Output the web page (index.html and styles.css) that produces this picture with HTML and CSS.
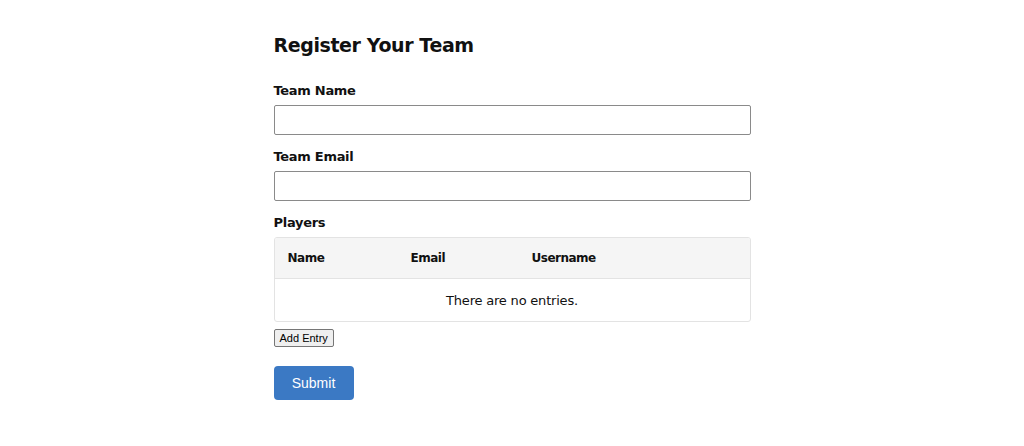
FILE: index.html
```html
<!DOCTYPE html>
<html>
<head>
<meta charset="utf-8">
<link rel="stylesheet" href="styles.css">
</head>
<body>
<div class="page">
  <form class="form">
    <h1 class="title">Register Your Team</h1>
    <label class="label">Team Name</label>
    <input class="field" type="text">
    <label class="label">Team Email</label>
    <input class="field" type="text">
    <label class="label">Players</label>
    <div class="table-wrap">
      <table class="table">
        <thead>
          <tr><th class="c1">Name</th><th class="c2">Email</th><th>Username</th></tr>
        </thead>
        <tbody>
          <tr><td colspan="3" class="empty">There are no entries.</td></tr>
        </tbody>
      </table>
    </div>
    <button type="button" class="add">Add Entry</button>
    <button type="button" class="submit">Submit</button>
  </form>
</div>
</body>
</html>
```
FILE: styles.css
```css
html, body { margin: 0; padding: 0; background: #fff; }
body { font-family: "DejaVu Sans", Verdana, sans-serif; color: #111; }
.page { display: flex; justify-content: center; }
.form { width: 477px; display: flex; flex-direction: column; align-items: flex-start; padding-top: 33px; }
.title { font-size: 19px; font-weight: bold; margin: 0 0 26px 0; line-height: 24px; letter-spacing: -0.4px; }
.label { font-size: 13px; font-weight: bold; line-height: 16px; margin-bottom: 6px; letter-spacing: -0.3px; }
.field { width: 100%; box-sizing: border-box; height: 30px; border: 1px solid #8a8a8a; border-radius: 2px; margin: 0 0 14px 0; padding: 0 6px; background: #fff; }
.table-wrap { width: 100%; box-sizing: border-box; border: 1px solid #e3e3e3; border-radius: 3px; overflow: hidden; }
.table { width: 100%; border-collapse: collapse; font-size: 13px; }
.table th { background: #f5f5f5; text-align: left; font-weight: bold; font-size: 12px; letter-spacing: -0.5px; height: 40px; padding: 0 0 0 13px; border-bottom: 1px solid #e3e3e3; }
.table th.c1 { width: 110px; }
.table th.c2 { width: 108px; }
.empty { text-align: center; height: 42px; padding: 0; font-size: 13px; letter-spacing: -0.2px; }
.add { margin: 7px 0 0 0; font-family: "Liberation Sans", Arial, sans-serif; font-size: 11px; height: 18px; padding: 0 5px; border: 1px solid #767676; border-radius: 2px; background: #efefef; color: #000; line-height: 16px; }
.submit { margin: 19px 0 0 0; width: 80px; height: 34px; background: #3b79c4; color: #fff; border: none; border-radius: 4px; font-family: "Liberation Sans", Arial, sans-serif; font-size: 14px; }
```
